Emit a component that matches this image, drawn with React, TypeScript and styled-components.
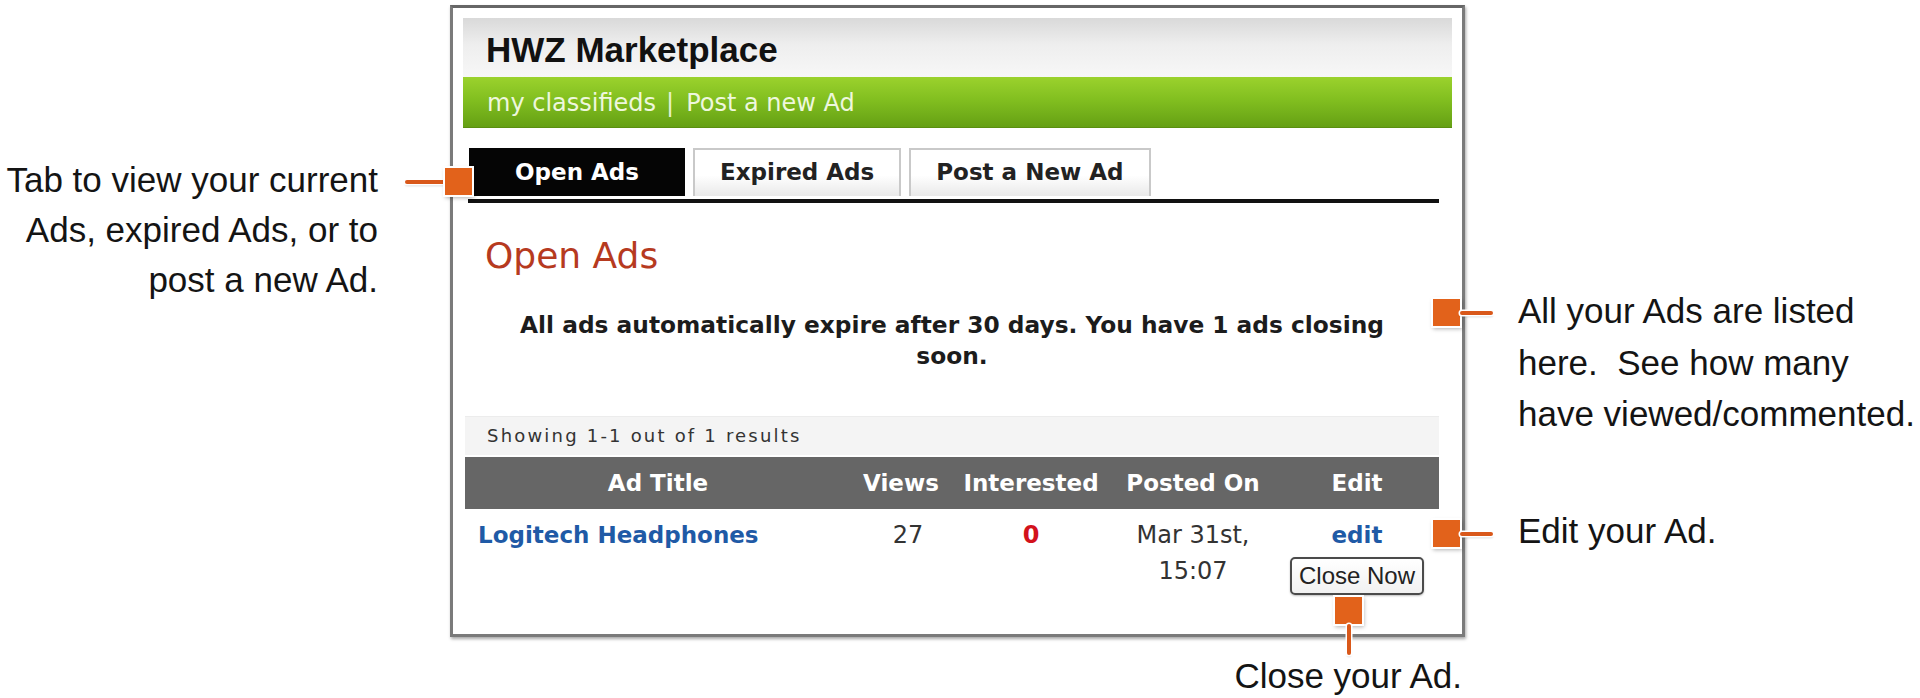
import React from "react";
import styled, { createGlobalStyle } from "styled-components";

const Global = createGlobalStyle`
  html, body { margin: 0; padding: 0; background: #ffffff; }
  body { overflow: hidden; }
  * { box-sizing: border-box; }
`;

const Page = styled.div`
  position: relative;
  width: 1920px;
  height: 698px;
  display: flex;
  background: #ffffff;
  font-family: "Liberation Sans", Arial, sans-serif;
  color: #111;
`;

const Note = styled.div<{ $align: "left" | "right" }>`
  font-family: "Liberation Sans", Arial, sans-serif;
  font-size: 35px;
  color: #141414;
  white-space: pre;
  text-align: ${(p) => p.$align};
`;

const LeftColumn = styled.div`
  width: 450px;
  flex: none;
  padding: 155px 72px 0 0;
  display: flex;
  justify-content: flex-end;
`;

const LeftNote = styled(Note)`
  line-height: 50px;
`;

const RightColumn = styled.div`
  flex: 1;
  padding: 285px 0 0 53px;
  display: flex;
  flex-direction: column;
  gap: 65px;
`;

const RightNote = styled(Note)`
  line-height: 51.5px;
`;

const PanelColumn = styled.div`
  width: 1015px;
  flex: none;
  display: flex;
  flex-direction: column;
  padding-top: 5px;
`;

const BottomNote = styled(Note)`
  line-height: 40px;
  margin-top: 19px;
  padding-right: 3px;
`;

const Panel = styled.div`
  width: 1015px;
  height: 632px;
  border: 3px solid #7a7a7a;
  border-top-color: #666;
  box-shadow: 1px 2px 3px rgba(0, 0, 0, 0.35);
  background: #fff;
  padding: 10px 10px 0;
  display: flex;
  flex-direction: column;
`;

const HeaderBand = styled.div`
  height: 59px;
  padding: 12px 0 0 23px;
  background: linear-gradient(#d9d9d9, #eeeeee 45%, #f7f7f7);
`;

const Title = styled.h1`
  margin: 0;
  font-family: "Liberation Sans", Arial, sans-serif;
  font-weight: 700;
  font-size: 35px;
  line-height: 40px;
  color: #111;
`;

const NavBar = styled.div`
  height: 51px;
  padding: 1px 0 0 24px;
  display: flex;
  align-items: center;
  background: linear-gradient(#9bd22d, #82bf20 45%, #65a014);
  border-bottom: 1px solid #5a8f10;
  font-family: "DejaVu Sans", Verdana, sans-serif;
  font-size: 24px;
  color: #eef7dd;
`;

const NavLink = styled.span`
  white-space: nowrap;
`;

const NavSep = styled.span`
  margin: 0 12px 0 10px;
  color: #e6f3cf;
`;

const Content = styled.div`
  padding: 0 13px 0 2px;
  display: flex;
  flex-direction: column;
  font-family: "DejaVu Sans", Verdana, sans-serif;
`;

const TabBar = styled.div`
  margin: 20px 0 0 3px;
  padding: 0 0 3px 1px;
  border-bottom: 4px solid #111;
  display: flex;
  gap: 8px;
`;

const Tab = styled.div<{ $active?: boolean }>`
  height: 48px;
  min-width: ${(p) => (p.$active ? "216px" : "0")};
  padding: 0 25px;
  text-align: center;
  font-family: "DejaVu Sans", Verdana, sans-serif;
  font-weight: 700;
  font-size: 23px;
  line-height: ${(p) => (p.$active ? "48px" : "45px")};
  white-space: nowrap;
  color: ${(p) => (p.$active ? "#fff" : "#222")};
  background: ${(p) =>
    p.$active ? "#050505" : "linear-gradient(#ffffff, #ffffff 55%, #e9e9e9)"};
  border: ${(p) => (p.$active ? "none" : "2px solid #c9c9c9")};
  border-bottom: none;
`;

const SectionTitle = styled.h2`
  margin: 33px 0 0;
  padding-left: 20px;
  font-family: "DejaVu Sans", Verdana, sans-serif;
  font-weight: 400;
  font-size: 36px;
  line-height: 40px;
  color: #b63a1f;
`;

const Description = styled.p`
  margin: 33px auto 0;
  width: 915px;
  text-align: center;
  font-family: "DejaVu Sans", Verdana, sans-serif;
  font-weight: 700;
  font-size: 23.3px;
  line-height: 31px;
  color: #1c1c1c;
`;

const ResultsBar = styled.div`
  margin-top: 45px;
  height: 39px;
  padding-left: 22px;
  background: #f4f4f4;
  border-top: 1px solid #ececec;
  font-family: "DejaVu Sans", Verdana, sans-serif;
  font-size: 18px;
  letter-spacing: 2.2px;
  line-height: 38px;
  color: #333;
`;

const columns = "386px 100px 160px 164px 164px";

const HeadRow = styled.div`
  margin-top: 2px;
  height: 52px;
  display: grid;
  grid-template-columns: ${columns};
  background: #666666;
`;

const HeadCell = styled.div`
  text-align: center;
  font-family: "DejaVu Sans", Verdana, sans-serif;
  font-weight: 700;
  font-size: 23px;
  line-height: 52px;
  color: #ffffff;
  white-space: nowrap;
`;

const DataRow = styled.div`
  display: grid;
  grid-template-columns: ${columns};
  padding: 8px 0;
`;

const Cell = styled.div<{ $align?: "left" | "center"; $shift?: number }>`
  display: flex;
  flex-direction: column;
  align-items: ${(p) => (p.$align === "left" ? "flex-start" : "center")};
  padding-left: ${(p) => (p.$align === "left" ? "13px" : `${p.$shift ?? 0}px`)};
  text-align: center;
  font-family: "DejaVu Sans", Verdana, sans-serif;
  font-size: 24px;
  line-height: 36px;
  color: #333;
`;

const LinkText = styled.span`
  font-weight: 700;
  font-size: 23px;
  color: #1f5aa6;
  white-space: nowrap;
`;

const Count = styled.span<{ $hot?: boolean }>`
  font-weight: ${(p) => (p.$hot ? 700 : 400)};
  color: ${(p) => (p.$hot ? "#d3121c" : "#333")};
`;

const CloseButton = styled.button`
  margin-top: 4px;
  height: 38px;
  padding: 0 7px;
  border: 2px solid #4b4b4b;
  border-radius: 5px;
  background: linear-gradient(#ffffff, #f1f1f1);
  font-family: "Liberation Sans", Arial, sans-serif;
  font-size: 24px;
  line-height: 32px;
  color: #222;
  box-shadow: 0 1px 2px rgba(0, 0, 0, 0.25);
`;

type Dir = "left" | "right" | "down";

const Marker = styled.div<{ $dir: Dir }>`
  position: absolute;
  z-index: 2;
  display: flex;
  align-items: center;
  flex-direction: ${(p) =>
    p.$dir === "left" ? "row-reverse" : p.$dir === "right" ? "row" : "column"};
`;

const MarkerSquare = styled.div`
  width: 27px;
  height: 27px;
  background: #e2621b;
  box-shadow: 0 0 0 2px #ffffff, 1px 2px 4px 1px rgba(0, 0, 0, 0.3);
`;

const MarkerStem = styled.div<{ $dir: Dir; $len: number }>`
  width: ${(p) => (p.$dir === "down" ? "4px" : `${p.$len}px`)};
  height: ${(p) => (p.$dir === "down" ? `${p.$len}px` : "4px")};
  background: #d9581a;
  border-radius: 2px;
  box-shadow: 0 0 0 1.5px #ffffff, 0 2px 2px rgba(0, 0, 0, 0.2);
`;

const Callout: React.FC<{ dir: Dir; len: number; x: number; y: number }> = ({
  dir,
  len,
  x,
  y,
}) => (
  <Marker $dir={dir} style={{ left: x, top: y }}>
    <MarkerSquare />
    <MarkerStem $dir={dir} $len={len} />
  </Marker>
);

export default function App() {
  return (
    <>
      <Global />
      <Page>
        <LeftColumn>
          <LeftNote $align="right">
            {"Tab to view your current\nAds, expired Ads, or to\npost a new Ad."}
          </LeftNote>
        </LeftColumn>

        <PanelColumn>
          <Panel>
            <HeaderBand>
              <Title>HWZ Marketplace</Title>
            </HeaderBand>
            <NavBar>
              <NavLink>my classifieds</NavLink>
              <NavSep>|</NavSep>
              <NavLink>Post a new Ad</NavLink>
            </NavBar>
            <Content>
              <TabBar>
                <Tab $active>Open Ads</Tab>
                <Tab>Expired Ads</Tab>
                <Tab>Post a New Ad</Tab>
              </TabBar>
              <SectionTitle>Open Ads</SectionTitle>
              <Description>
                All ads automatically expire after 30 days. You have 1 ads closing soon.
              </Description>
              <ResultsBar>Showing 1-1 out of 1 results</ResultsBar>
              <HeadRow>
                <HeadCell>Ad Title</HeadCell>
                <HeadCell>Views</HeadCell>
                <HeadCell>Interested</HeadCell>
                <HeadCell>Posted On</HeadCell>
                <HeadCell>Edit</HeadCell>
              </HeadRow>
              <DataRow>
                <Cell $align="left">
                  <LinkText>Logitech Headphones</LinkText>
                </Cell>
                <Cell $shift={14}>
                  <Count>27</Count>
                </Cell>
                <Cell>
                  <Count $hot>0</Count>
                </Cell>
                <Cell>
                  <span>Mar 31st,</span>
                  <span>15:07</span>
                </Cell>
                <Cell>
                  <LinkText>edit</LinkText>
                  <CloseButton type="button">Close Now</CloseButton>
                </Cell>
              </DataRow>
            </Content>
          </Panel>
          <BottomNote $align="right">Close your Ad.</BottomNote>
        </PanelColumn>

        <RightColumn>
          <RightNote $align="left">
            {"All your Ads are listed\nhere.  See how many\nhave viewed/commented."}
          </RightNote>
          <RightNote $align="left">Edit your Ad.</RightNote>
        </RightColumn>

        <Callout dir="left" len={40} x={405} y={168} />
        <Callout dir="right" len={33} x={1433} y={299} />
        <Callout dir="right" len={33} x={1433} y={520} />
        <Callout dir="down" len={31} x={1335} y={597} />
      </Page>
    </>
  );
}
